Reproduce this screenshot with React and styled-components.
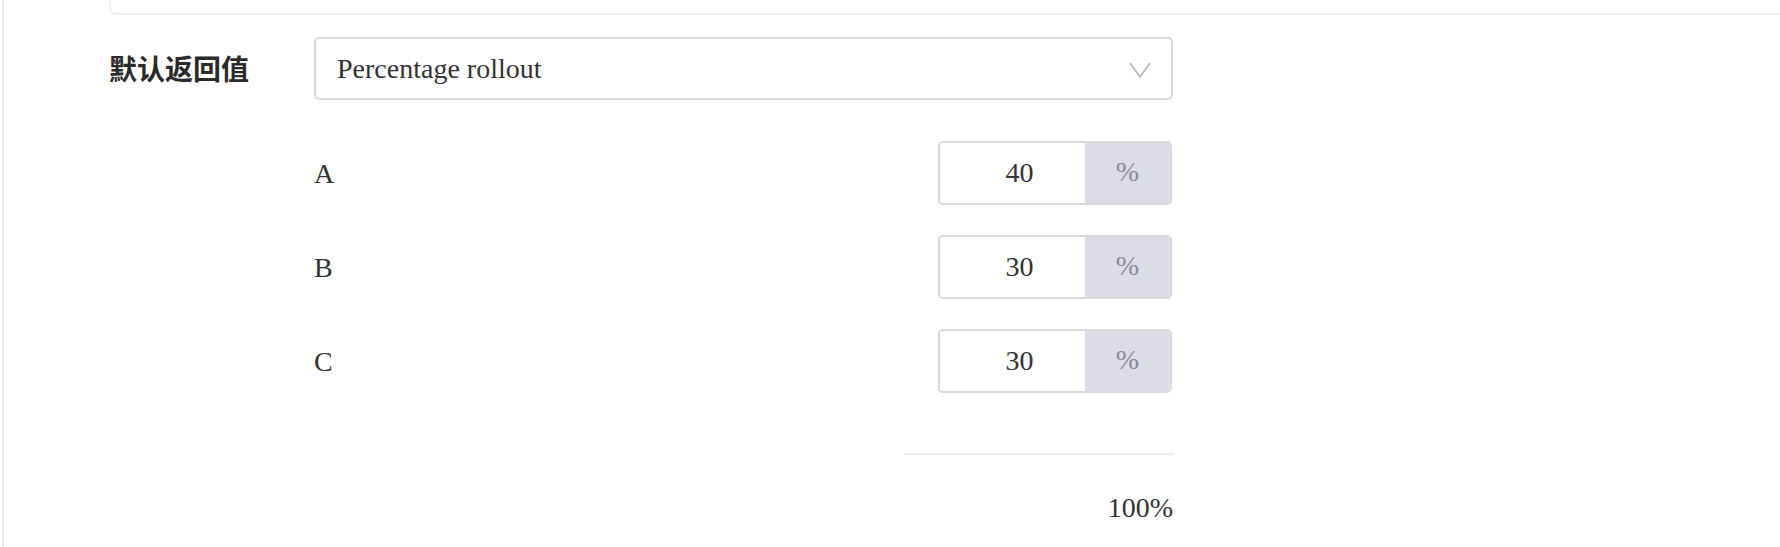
import React from "react";
import styled, { createGlobalStyle } from "styled-components";

const GlobalStyle = createGlobalStyle`
  html, body {
    margin: 0;
    padding: 0;
    background: #ffffff;
    overflow: hidden;
  }
  body {
    font-family: "Liberation Serif", "Times New Roman", serif;
    color: #333333;
  }
  * { box-sizing: border-box; }
`;

const Page = styled.div`
  height: 547px;
  padding-left: 2px;
`;

const Panel = styled.div`
  height: 100%;
  border-left: 2px solid #eeeeee;
  padding-left: 105px;
  display: flex;
  flex-direction: column;
`;

const TopCard = styled.div`
  height: 15px;
  margin-right: -20px;
  border: 2px solid #efefef;
  border-top: none;
  border-radius: 0 0 0 7px;
  background: #ffffff;
`;

const FormRow = styled.div`
  display: grid;
  grid-template-columns: 205px 859px;
  align-items: center;
  margin-top: 22px;
`;

const FieldLabel = styled.div`
  font-family: "Noto Sans CJK SC", "Noto Sans", sans-serif;
  font-weight: 700;
  font-size: 28px;
  line-height: 1;
  color: #2b2b2b;
  margin-top: -2px;
`;

const Select = styled.div`
  height: 63px;
  border: 2px solid #d9d9d9;
  border-radius: 5px;
  display: flex;
  align-items: center;
  justify-content: space-between;
  padding: 0 20px 0 21px;
  font-size: 28px;
  color: #333333;
  background: #ffffff;
`;

const SelectText = styled.span`
  line-height: 1;
  margin-top: 1px;
`;

const Chevron = styled.svg`
  width: 22px;
  height: 16px;
  display: block;
  margin-top: 2px;
`;

const Rollout = styled.div`
  margin-left: 205px;
  width: 859px;
  display: flex;
  flex-direction: column;
  margin-top: 41px;
`;

const Rows = styled.div`
  display: flex;
  flex-direction: column;
  gap: 30px;
`;

const PercentRow = styled.div`
  height: 64px;
  display: flex;
  align-items: center;
  justify-content: space-between;
`;

const VariantName = styled.span`
  font-size: 28px;
  line-height: 1;
  color: #333333;
  margin-top: 1px;
`;

const InputGroup = styled.div`
  width: 234px;
  height: 64px;
  margin-right: 1px;
  display: flex;
  border: 2px solid #d9d9d9;
  border-radius: 5px;
  overflow: hidden;
`;

const NumberInput = styled.input`
  width: 145px;
  height: 100%;
  border: none;
  outline: none;
  padding: 0 0 0 14px;
  margin: 0;
  text-align: center;
  font-family: "Liberation Serif", "Times New Roman", serif;
  font-size: 28px;
  color: #333333;
  background: #ffffff;
`;

const Addon = styled.div`
  flex: 1;
  display: flex;
  align-items: center;
  justify-content: center;
  background: #dcdbe8;
  font-size: 28px;
  color: #8a8a93;
  padding-bottom: 2px;
`;

const Divider = styled.div`
  align-self: flex-end;
  width: 270px;
  height: 2px;
  margin-top: 60px;
  margin-right: -1px;
  background: #eeeeee;
`;

const Total = styled.div`
  align-self: flex-end;
  margin-top: 32px;
  font-size: 28px;
  line-height: 42px;
  color: #333333;
`;

const variants = [
  { name: "A", value: 40 },
  { name: "B", value: 30 },
  { name: "C", value: 30 },
];

export default function App() {
  const total = variants.reduce((s, v) => s + v.value, 0);
  return (
    <>
      <GlobalStyle />
      <Page>
        <Panel>
          <TopCard />
          <FormRow>
            <FieldLabel>默认返回值</FieldLabel>
            <Select>
              <SelectText>Percentage rollout</SelectText>
              <Chevron viewBox="0 0 22 16">
                <polyline
                  points="1,1 11,15 21,1"
                  fill="none"
                  stroke="#b5b5b5"
                  strokeWidth="1.6"
                />
              </Chevron>
            </Select>
          </FormRow>
          <Rollout>
            <Rows>
              {variants.map((v) => (
                <PercentRow key={v.name}>
                  <VariantName>{v.name}</VariantName>
                  <InputGroup>
                    <NumberInput readOnly value={v.value} />
                    <Addon>%</Addon>
                  </InputGroup>
                </PercentRow>
              ))}
            </Rows>
            <Divider />
            <Total>{total}%</Total>
          </Rollout>
        </Panel>
      </Page>
    </>
  );
}
